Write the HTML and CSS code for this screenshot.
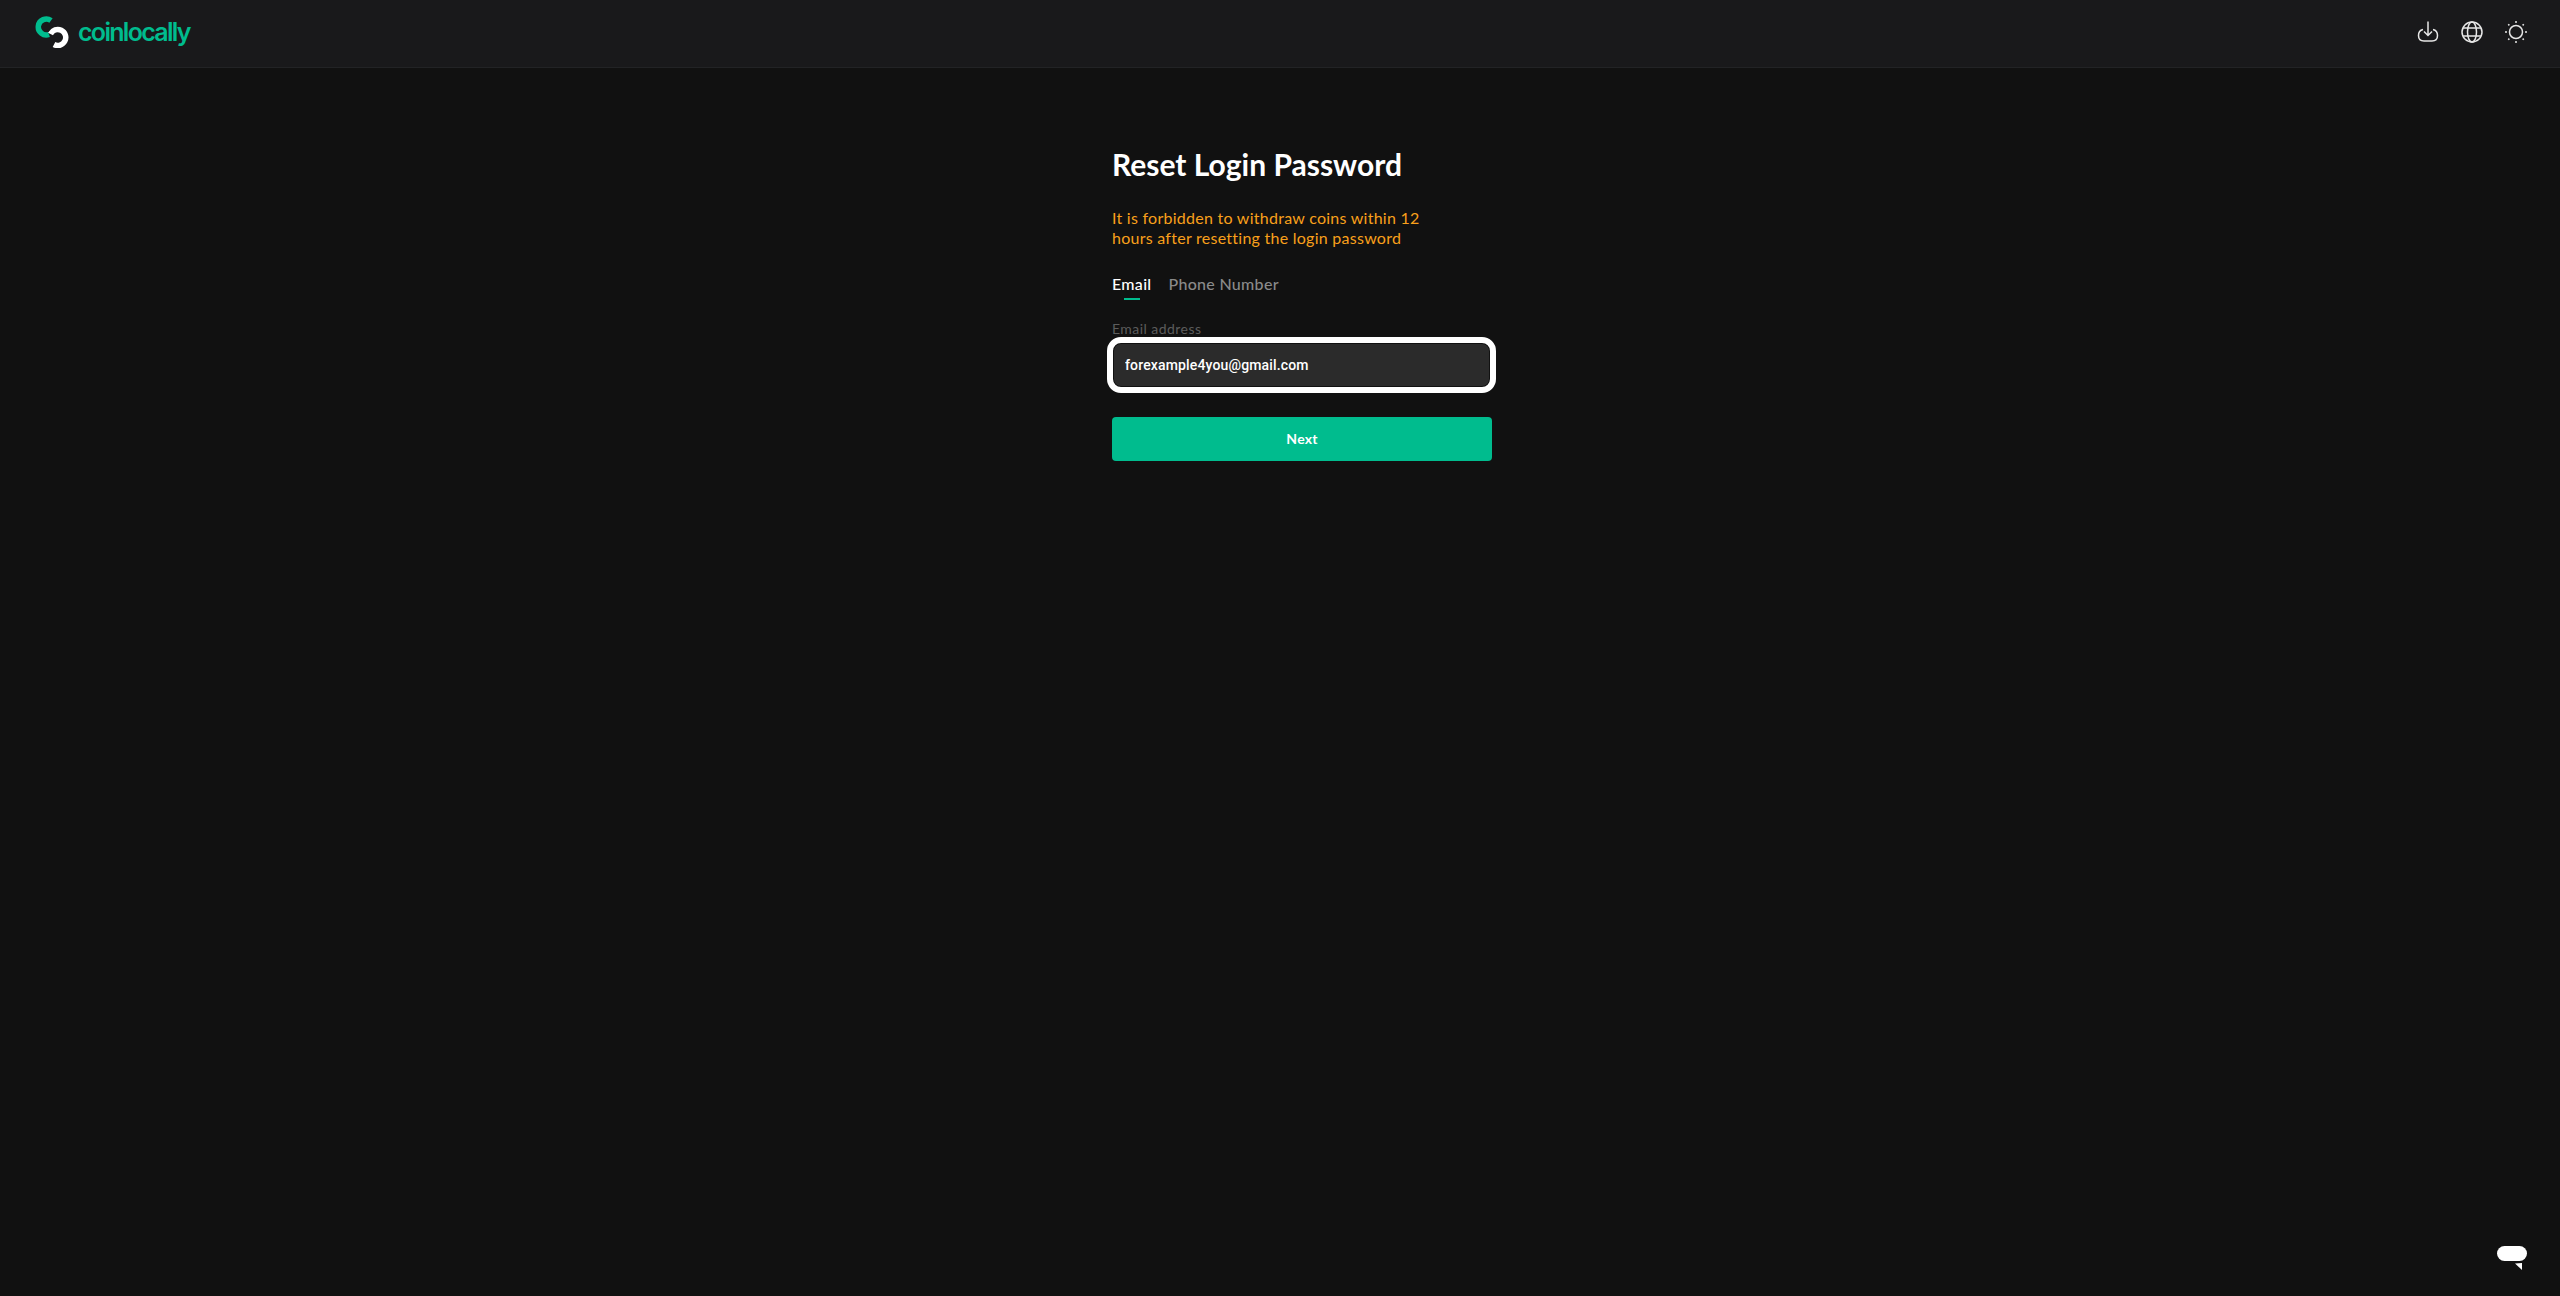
FILE: index.html
```html
<!DOCTYPE html>
<html lang="en">
<head>
    <meta charset="UTF-8">
    <title>Reset Login Password</title>
    <link rel="stylesheet" href="styles.css">
</head>
<body>
    <header class="topbar">
        <a class="logo" href="#">
            <svg class="logo-mark" width="36" height="32" viewBox="0 0 36 32" fill="none" stroke-width="5.5">
                <path d="M17 4.5 A8 8 0 1 0 15 18.5" stroke="#00bc8e"/>
                <path d="M16.5 18 A8 8 0 1 1 20 28.5" stroke="#fff"/>
            </svg>
            <span class="logo-text">coinlocally</span>
        </a>
        <div class="topbar-icons">
            <svg width="24" height="24" viewBox="0 0 24 24" fill="none" stroke="#e6e6e6" stroke-width="1.5">
                <path d="M7 9.5 Q2.5 10.5 2.5 15.5 Q2.5 21 8 21 H16 Q21.5 21 21.5 15.5 Q21.5 10.5 17 9.5"/>
                <path d="M12 1.5 V15 M8 11.5 L12 15.5 L16 11.5"/>
            </svg>
            <svg width="24" height="24" viewBox="0 0 24 24" fill="none" stroke="#e6e6e6" stroke-width="1.5">
                <circle cx="12" cy="12" r="10"/>
                <ellipse cx="12" cy="12" rx="4.5" ry="10"/>
                <path d="M3 8 H21 M3 16 H21"/>
            </svg>
            <svg width="24" height="24" viewBox="0 0 24 24" fill="none" stroke="#e6e6e6" stroke-width="1.5">
                <circle cx="12" cy="12" r="6.5"/>
                <path d="M12 1 V3 M12 21 V23 M1 12 H3 M21 12 H23 M4.2 4.2 L5.4 5.4 M18.6 18.6 L19.8 19.8 M4.2 19.8 L5.4 18.6 M18.6 5.4 L19.8 4.2"/>
            </svg>
        </div>
    </header>

    <main class="reset-form">
        <h1>Reset Login Password</h1>
        <p class="warning">It is forbidden to withdraw coins within 12 hours after resetting the login password</p>
        <div class="tabs">
            <span class="tab active">Email</span>
            <span class="tab">Phone Number</span>
        </div>
        <label class="field-label" for="email">Email address</label>
        <input id="email" class="field" type="text" value="forexample4you@gmail.com">
        <button class="next-btn">Next</button>
    </main>

    <div class="chat-bubble">
        <svg width="30" height="24" viewBox="0 0 30 24" fill="#fff">
            <rect x="0" y="0" width="30" height="15" rx="7.5"/>
            <path d="M18 17.5 L25 17 V24 Z"/>
        </svg>
    </div>
</body>
</html>
```

FILE: styles.css
```css
* {
    box-sizing: border-box;
}

body {
    margin: 0;
    min-height: 1296px;
    background: #111111;
    color: #fff;
    font-family: "Lato", "Noto Sans", sans-serif;
    overflow: hidden;
}

.topbar {
    display: flex;
    justify-content: space-between;
    align-items: center;
    height: 68px;
    padding: 0 32px 3px 34px;
    background: #19191b;
    border-bottom: 1px solid #222325;
}

.logo {
    display: flex;
    align-items: center;
    gap: 8px;
    text-decoration: none;
}

.logo-text {
    color: #00bc8e;
    font-family: "Inter", sans-serif;
    font-size: 25px;
    font-weight: 600;
    letter-spacing: -1.7px;
}

.topbar-icons {
    display: flex;
    gap: 20px;
    align-items: center;
}

.reset-form {
    width: 380px;
    margin: 76px 0 0 1112px;
}

.reset-form h1 {
    margin: 0;
    font-size: 30px;
    line-height: 40px;
    font-weight: 700;
}

.warning {
    margin: 24px 0 0;
    color: #f9a01b;
    font-size: 16px;
    line-height: 20px;
    letter-spacing: 0.26px;
    width: 320px;
}

.tabs {
    display: flex;
    gap: 17px;
    margin-top: 24px;
    font-size: 16px;
    font-weight: 500;
    line-height: 24px;
    letter-spacing: 0.3px;
}

.tab {
    color: #8a8a8a;
    padding-bottom: 4px;
    position: relative;
}

.tab.active {
    color: #fff;
}

.tab.active::after {
    content: "";
    position: absolute;
    left: 50%;
    bottom: 0;
    width: 16px;
    height: 2px;
    margin-left: -8px;
    background: #00bc8e;
}

.field-label {
    display: block;
    margin-top: 20px;
    color: #5c5c5c;
    font-size: 14px;
    line-height: 18px;
    letter-spacing: 0.45px;
}

.field {
    display: block;
    width: 377px;
    height: 44px;
    margin: 5px 0 0 1px;
    padding: 0 11px;
    background: #2b2b2b;
    border: 1px solid #111111;
    border-radius: 8px;
    outline: 6px solid #fff;
    outline-offset: 0;
    color: #fff;
    font-family: "Roboto", sans-serif;
    font-size: 14px;
    font-weight: 500;
    letter-spacing: 0.15px;
}

.next-btn {
    display: block;
    width: 100%;
    height: 44px;
    margin-top: 30px;
    padding-bottom: 2px;
    background: #00bc8e;
    border: none;
    border-radius: 4px;
    color: #fff;
    font-family: inherit;
    font-size: 14px;
    font-weight: 700;
    letter-spacing: 0.2px;
}

.chat-bubble {
    position: absolute;
    right: 33px;
    bottom: 26px;
    line-height: 0;
}
```
